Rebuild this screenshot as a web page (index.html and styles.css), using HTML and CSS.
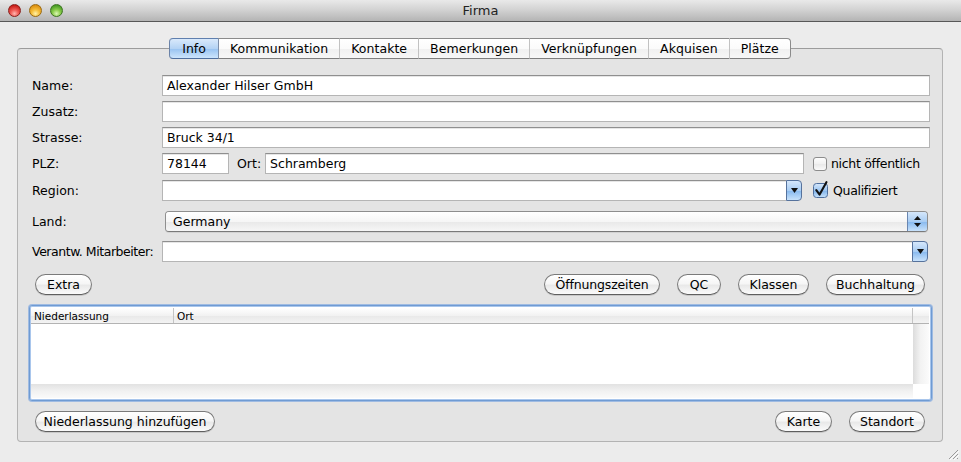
FILE: index.html
```html
<!DOCTYPE html>
<html lang="de">
<head>
<meta charset="utf-8">
<title>Firma</title>
<link rel="stylesheet" href="styles.css">
</head>
<body>
<div class="titlebar">
  <div class="lights">
    <span class="light red"></span>
    <span class="light yellow"></span>
    <span class="light green"></span>
  </div>
  <div class="title">Firma</div>
  <div></div>
</div>

<div class="main">
  <div class="tabs">
    <div class="tab first selected">Info</div>
    <div class="tab">Kommunikation</div>
    <div class="tab">Kontakte</div>
    <div class="tab">Bemerkungen</div>
    <div class="tab">Verknüpfungen</div>
    <div class="tab">Akquisen</div>
    <div class="tab last">Plätze</div>
  </div>

  <div class="panel">
    <div class="row r-name">
      <span class="lbl">Name:</span>
      <div class="field grow">Alexander Hilser GmbH</div>
    </div>
    <div class="row r-gap">
      <span class="lbl">Zusatz:</span>
      <div class="field grow"></div>
    </div>
    <div class="row r-gap">
      <span class="lbl">Strasse:</span>
      <div class="field grow">Bruck 34/1</div>
    </div>
    <div class="row r-gap">
      <span class="lbl">PLZ:</span>
      <div class="field plz">78144</div>
      <span class="ort-lbl">Ort:</span>
      <div class="field grow">Schramberg</div>
      <div class="check">
        <span class="cbox"></span>
        <span class="check-text">nicht öffentlich</span>
      </div>
    </div>
    <div class="row r-region">
      <span class="lbl">Region:</span>
      <div class="combo grow region">
        <div class="combo-text"></div>
        <div class="arrow-btn">
          <svg width="7" height="5" viewBox="0 0 7 5"><path d="M0 0H7L3.5 5Z" fill="#111"/></svg>
        </div>
      </div>
      <div class="check">
        <svg class="cchecked" width="16" height="17" viewBox="0 0 16 17">
          <defs>
            <linearGradient id="cb" x1="0" y1="0" x2="0" y2="1">
              <stop offset="0" stop-color="#d7e8fb"/>
              <stop offset="0.5" stop-color="#9cc5f1"/>
              <stop offset="0.51" stop-color="#7fb2ea"/>
              <stop offset="1" stop-color="#c7e2fb"/>
            </linearGradient>
          </defs>
          <rect x="0.5" y="2.5" width="14" height="14" rx="3" fill="url(#cb)" stroke="#4f6f9e"/>
          <path d="M3.3 9.2 L6.6 13.6 L13.4 1.2" fill="none" stroke="#111" stroke-width="2.1" stroke-linecap="round" stroke-linejoin="round"/>
        </svg>
        <span class="check-text">Qualifiziert</span>
      </div>
    </div>
    <div class="row r-land">
      <span class="lbl">Land:</span>
      <div class="popup grow">
        <div class="popup-text">Germany</div>
        <div class="popup-btn">
          <svg width="7" height="11" viewBox="0 0 7 11"><path d="M0 4H7L3.5 0Z M0 7H7L3.5 11Z" fill="#111"/></svg>
        </div>
      </div>
    </div>
    <div class="row r-verant">
      <span class="lbl tight">Verantw. Mitarbeiter:</span>
      <div class="combo grow verant">
        <div class="combo-text"></div>
        <div class="arrow-btn">
          <svg width="7" height="5" viewBox="0 0 7 5"><path d="M0 0H7L3.5 5Z" fill="#111"/></svg>
        </div>
      </div>
    </div>

    <div class="btnrow r-buttons">
      <button class="btn b-extra">Extra</button>
      <div class="spacer"></div>
      <button class="btn b-oeff">Öffnungszeiten</button>
      <button class="btn b-qc">QC</button>
      <button class="btn b-klassen">Klassen</button>
      <button class="btn b-buch">Buchhaltung</button>
    </div>

    <div class="table">
      <div class="thead">
        <div class="th c1">Niederlassung</div>
        <div class="th c2">Ort</div>
        <div class="th c3"></div>
      </div>
      <div class="tbody">
        <div class="tcells"></div>
        <div class="vstrip"></div>
      </div>
      <div class="tfoot">
        <div class="hstrip"></div>
        <div class="corner"></div>
      </div>
    </div>

    <div class="btnrow r-bottom">
      <button class="btn b-add">Niederlassung hinzufügen</button>
      <div class="spacer"></div>
      <button class="btn b-karte">Karte</button>
      <button class="btn b-stand">Standort</button>
    </div>
  </div>
</div>

<svg class="grip" width="12" height="12" viewBox="0 0 12 12">
  <path d="M11 2 L2 11 M11 6 L6 11 M11 10 L10 11" stroke="#9a9a9a" stroke-width="1"/>
  <path d="M12 3 L3 12 M12 7 L7 12" stroke="#fdfdfd" stroke-width="1"/>
</svg>
</body>
</html>
```
FILE: styles.css
```css
* {
  box-sizing: border-box;
}

body {
  margin: 0;
  width: 961px;
  height: 462px;
  background: #ececec;
  font-family: "DejaVu Sans", "Liberation Sans", sans-serif;
  font-size: 12.5px;
  color: #000;
  overflow: hidden;
  position: relative;
}

/* ---------- title bar ---------- */
.titlebar {
  height: 22px;
  display: grid;
  grid-template-columns: 1fr auto 1fr;
  align-items: center;
  background: linear-gradient(#e9e9e9, #d3d3d3 45%, #b4b4b4 100%);
  border-bottom: 1px solid #585858;
}

.lights {
  display: flex;
  gap: 8px;
  padding-left: 8px;
  padding-bottom: 1px;
}

.light {
  width: 13px;
  height: 13px;
  border-radius: 50%;
}

.red {
  background: radial-gradient(circle at 50% 78%, #ffb7b0 0, #f2605a 35%, #c2150f 85%);
  border: 1px solid #8a1f1b;
}

.yellow {
  background: radial-gradient(circle at 50% 78%, #fff2a8 0, #f6bf3c 38%, #d98a0b 85%);
  border: 1px solid #9a6a10;
}

.green {
  background: radial-gradient(circle at 50% 78%, #dcf7b4 0, #8ccd4c 38%, #3f9420 85%);
  border: 1px solid #3d7421;
}

.title {
  font-size: 13px;
  color: #222;
}

/* ---------- tabs & panel ---------- */
.main {
  padding: 16px 18px 0 17px;
}

.tabs {
  display: flex;
  justify-content: center;
  position: relative;
  z-index: 1;
  height: 21px;
}

.tab {
  height: 21px;
  padding: 0 11px;
  display: flex;
  align-items: center;
  letter-spacing: 0.05px;
  border-top: 1px solid #8b8b8b;
  border-bottom: 1px solid #7e7e7e;
  border-left: 1px solid #c2c2c2;
  background: linear-gradient(#ffffff, #fbfbfb 50%, #f0f0f0 51%, #f7f7f7);
}

.tab.first {
  border-left: 1px solid #6b83a8;
  border-radius: 4px 0 0 4px;
}

.tab.last {
  border-right: 1px solid #8b8b8b;
  border-radius: 0 4px 4px 0;
}

.tab.selected {
  padding: 0 12px;
  border-top-color: #5f7fae;
  border-bottom-color: #4f6f9e;
  background: linear-gradient(#d9e9fb, #b4d3f4 50%, #97c2f0 51%, #cde5fc);
}

.tab.selected + .tab {
  border-left-color: #7d8ea8;
}

.panel {
  margin-top: -11px;
  border: 1px solid #b3b3b3;
  border-top-color: #9c9c9c;
  border-radius: 4px;
  background: #e4e4e4;
  padding: 26px 12px 8px 14px;
  height: 394px;
}

/* ---------- form rows ---------- */
.row {
  display: flex;
  align-items: center;
  height: 21px;
}

.r-gap {
  margin-top: 5px;
}

.r-region {
  margin-top: 6px;
  height: 21px;
}

.r-land {
  margin-top: 10px;
}

.r-verant {
  margin-top: 9px;
}

.lbl {
  width: 130px;
  flex: none;
  white-space: nowrap;
}

.lbl.tight {
  letter-spacing: -0.45px;
}

.grow {
  flex: 1;
  min-width: 0;
}

.field {
  height: 21px;
  background: #fff;
  border: 1px solid #b5b5b5;
  border-top-color: #8f8f8f;
  box-shadow: inset 0 1px 0 #e6e6e6;
  padding: 0 4px;
  display: flex;
  align-items: center;
  white-space: nowrap;
}

.field.plz {
  width: 67px;
  flex: none;
}

.ort-lbl {
  margin: 0 4px 0 8px;
}

.check {
  width: 126px;
  flex: none;
  padding-left: 9px;
  display: flex;
  align-items: center;
  gap: 4px;
  white-space: nowrap;
}

.check-text {
  letter-spacing: -0.3px;
}

.cbox {
  width: 14px;
  height: 14px;
  border: 1px solid #8c8c8c;
  border-radius: 3px;
  background: linear-gradient(#fdfdfd, #f1f1f1 50%, #e9e9e9 51%, #fafafa);
  flex: none;
}

.cchecked {
  margin-top: -3px;
  flex: none;
}

/* combo boxes */
.combo {
  display: flex;
  height: 21px;
}

.combo.region {
  margin-right: 2px;
}

.combo.verant {
  margin-right: 2px;
}

.combo-text {
  flex: 1;
  background: #fff;
  border: 1px solid #b5b5b5;
  border-top-color: #8f8f8f;
  border-right: none;
  box-shadow: inset 0 1px 0 #e6e6e6;
}

.arrow-btn {
  width: 16px;
  flex: none;
  border: 1px solid #56729c;
  border-radius: 0 4px 4px 0;
  background: linear-gradient(#d5e7fb, #a9cdf3 50%, #86b8ee 51%, #c8e2fb);
  display: flex;
  align-items: center;
  justify-content: center;
}

/* popup button */
.popup {
  height: 21px;
  margin: 0 2px 0 3px;
  display: flex;
  border: 1px solid #8e8e8e;
  border-bottom-color: #7a7a7a;
  border-radius: 4px;
  overflow: hidden;
  box-shadow: 0 1px 0 rgba(0, 0, 0, 0.08);
}

.popup-text {
  flex: 1;
  padding-left: 7px;
  display: flex;
  align-items: center;
  background: linear-gradient(#ffffff, #f6f6f6 50%, #e8e8e8 51%, #f6f6f6);
}

.popup-btn {
  width: 20px;
  border-left: 1px solid #6a86b0;
  background: linear-gradient(#d5e7fb, #a9cdf3 50%, #86b8ee 51%, #c8e2fb);
  display: flex;
  align-items: center;
  justify-content: center;
}

/* ---------- buttons ---------- */
.btnrow {
  display: flex;
  align-items: center;
  height: 21px;
}

.r-buttons {
  margin-top: 12px;
  padding: 0 5px 0 3px;
  gap: 17px;
}

.r-bottom {
  margin-top: 10px;
  padding: 0 5px 0 3px;
  gap: 17px;
}

.spacer {
  flex: 1;
}

.btn {
  font: inherit;
  color: #000;
  height: 21px;
  padding: 0 8px;
  border: 1px solid #7a7a7a;
  border-bottom-color: #5f5f5f;
  border-radius: 11px;
  background: linear-gradient(#ffffff, #f6f6f6 45%, #e9e9e9 55%, #fbfbfb);
  box-shadow: 0 1px 0 rgba(0, 0, 0, 0.12);
  display: flex;
  align-items: center;
  justify-content: center;
  white-space: nowrap;
}

.b-extra { width: 57px; }
.b-oeff { width: 116px; letter-spacing: -0.15px; }
.b-qc { width: 44px; }
.b-klassen { width: 71px; }
.b-buch { width: 99px; }
.b-add { width: 180px; }
.b-karte { width: 57px; }
.b-stand { width: 76px; }

/* ---------- table ---------- */
.table {
  margin: 10px -2px 0 -3px;
  height: 96px;
  border: 1px solid #6f9bd3;
  border-radius: 3px;
  box-shadow: 0 0 0 1px rgba(130, 170, 225, 0.7), inset 0 0 0 1px #a9c6ec;
  padding: 2px 2px 2px 1px;
  display: flex;
  flex-direction: column;
  background: #fff;
}

.thead {
  display: flex;
  height: 16px;
  flex: none;
  border-bottom: 1px solid #b3b3b3;
  background: linear-gradient(#ffffff, #f2f2f2 50%, #e8e8e8 51%, #f3f3f3);
}

.th {
  font-size: 10.5px;
  padding-left: 3px;
  display: flex;
  align-items: center;
  border-right: 1px solid #c4c4c4;
}

.c1 { width: 143px; }
.c2 { flex: 1; }
.c3 { width: 16px; border-right: none; }

.tbody {
  flex: 1;
  display: flex;
}

.tcells {
  flex: 1;
  background: #fff;
}

.vstrip {
  width: 16px;
  background: linear-gradient(90deg, #dcdcdc, #f2f2f2 45%, #fbfbfb);
}

.tfoot {
  height: 14px;
  flex: none;
  display: flex;
}

.hstrip {
  flex: 1;
  background: linear-gradient(#e2e2e2, #f1f1f1 50%, #fafafa);
}

.corner {
  width: 16px;
  background: #fff;
}

/* ---------- resize grip ---------- */
.grip {
  position: absolute;
  right: 2px;
  bottom: 2px;
}
```
